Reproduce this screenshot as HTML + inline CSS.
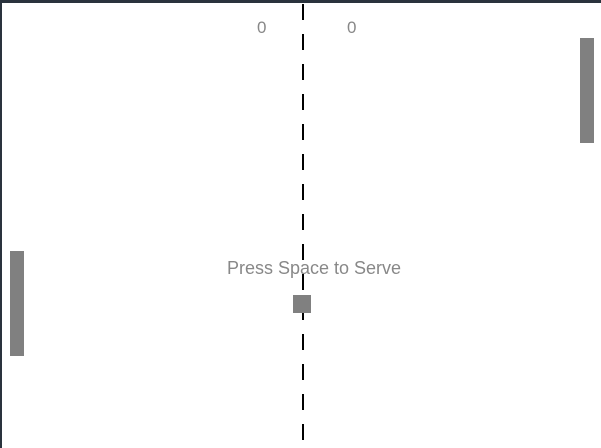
<!DOCTYPE html>
<html><head><style>
html,body{margin:0;padding:0;background:#fff;width:601px;height:448px;overflow:hidden;position:relative;font-family:"Liberation Sans",sans-serif}
.b{position:absolute;background:#808080}
.t{position:absolute;color:#888;font-size:17px;line-height:20px}
</style></head><body>
<div style="position:absolute;left:0;top:0;width:601px;height:3px;background:#2a333d"></div>
<div style="position:absolute;left:0;top:0;width:2px;height:448px;background:#2a333d"></div>
<svg style="position:absolute;left:0;top:0" width="601" height="448"><line x1="303" y1="4" x2="303" y2="448" stroke="#000" stroke-width="2" stroke-dasharray="16 14"/></svg>
<div class="t" style="left:257px;top:18px">0</div>
<div class="t" style="left:347px;top:18px">0</div>
<div class="b" style="left:580px;top:38px;width:14px;height:105px"></div>
<div class="b" style="left:10px;top:251px;width:14px;height:105px"></div>
<div class="b" style="left:293px;top:295px;width:18px;height:18px"></div>
<div class="t" style="left:0;width:628px;text-align:center;top:257px;font-size:18px;line-height:22px">Press Space to Serve</div>
</body></html>
